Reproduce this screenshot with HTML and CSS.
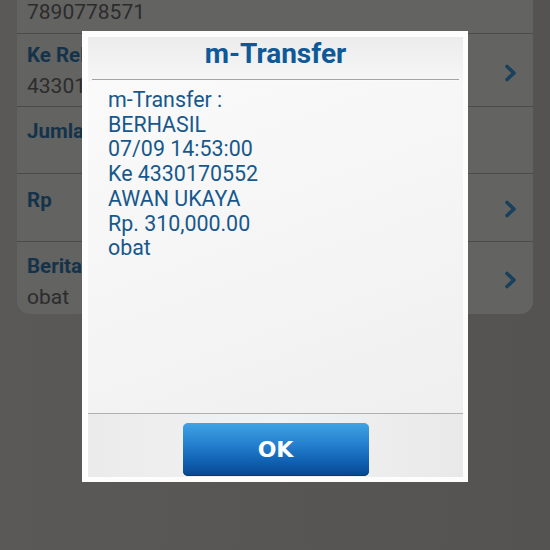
FILE: index.html
```html
<!DOCTYPE html>
<html>
<head>
<meta charset="utf-8">
<link rel="stylesheet" href="styles.css">
</head>
<body>
<div class="screen">
  <div class="card">
    <div class="row row-top"><span class="value">7890778571</span></div>
    <div class="row row-a">
      <div class="texts"><div class="label">Ke Rekening</div><div class="value">4330170552</div></div>
      <svg class="chev" viewBox="0 0 14 18"><path d="M3 2.5 L10 9 L3 15.5" /></svg>
    </div>
    <div class="row row-b">
      <div class="texts"><div class="label">Jumlah</div></div>
    </div>
    <div class="row row-c">
      <div class="texts"><div class="label">Rp</div></div>
      <svg class="chev" viewBox="0 0 14 18"><path d="M3 2.5 L10 9 L3 15.5" /></svg>
    </div>
    <div class="row row-d">
      <div class="texts"><div class="label">Berita</div><div class="value">obat</div></div>
      <svg class="chev" viewBox="0 0 14 18"><path d="M3 2.5 L10 9 L3 15.5" /></svg>
    </div>
  </div>
</div>

<div class="dialog">
  <div class="dlg-head"><h1 class="dlg-title">m-Transfer</h1></div>
  <div class="dlg-sep"></div>
  <div class="dlg-body">
    <div>m-Transfer :</div>
    <div>BERHASIL</div>
    <div>07/09 14:53:00</div>
    <div>Ke 4330170552</div>
    <div>AWAN UKAYA</div>
    <div>Rp. 310,000.00</div>
    <div>obat</div>
  </div>
  <div class="dlg-foot">
    <button class="ok">OK</button>
  </div>
</div>
</body>
</html>
```

FILE: styles.css
```css
html, body {
  margin: 0;
  padding: 0;
}
body {
  width: 550px;
  height: 550px;
  overflow: hidden;
  position: relative;
  background: linear-gradient(90deg, #5a5957 0%, #575654 50%, #545351 100%);
  font-family: Roboto, "Noto Sans", sans-serif;
}
.screen {
  padding: 0 17px;
}
.card {
  background: #636362;
  border-radius: 0 0 13px 13px;
}
.row {
  box-sizing: border-box;
  display: flex;
  align-items: center;
  justify-content: space-between;
  padding: 0 15px 0 10px;
  border-top: 1px solid #4b4b4a;
  font-size: 21px;
  line-height: 31px;
}
.row-top {
  border-top: none;
  height: 33px;
  line-height: 24px;
  align-items: flex-start;
}
.texts {
  align-self: flex-start;
  width: 55px;
  overflow: hidden;
  white-space: nowrap;
}
.row-a { height: 73px; padding-top: 6px; }
.row-b { height: 67px; padding-top: 9px; }
.row-c { height: 68px; padding-top: 11px; }
.row-d { height: 73px; padding-top: 9px; }
.row-c .chev { margin-top: -8px; }
.row-d .chev { margin-top: -6px; }
.label {
  font-weight: bold;
  color: #14334b;
  font-size: 20.5px;
}
.value {
  color: #2c2c2c;
}
.chev {
  width: 14px;
  height: 18px;
  fill: none;
  stroke: #19415d;
  stroke-width: 3.6;
  stroke-linecap: round;
  stroke-linejoin: round;
}

.dialog {
  position: absolute;
  left: 82px;
  top: 31px;
  width: 386px;
  height: 451px;
  box-sizing: border-box;
  border-style: solid;
  border-color: #fdfdfd;
  border-width: 6px 5px 5px 6px;
  display: flex;
  flex-direction: column;
  background: #f4f4f4;
}
.dlg-head {
  height: 42px;
  background: linear-gradient(180deg, #ececec 0%, #f6f6f6 100%);
  text-align: center;
}
.dlg-title {
  margin: 0;
  font-size: 28px;
  line-height: 33px;
  font-weight: bold;
  color: #0e5997;
}
.dlg-sep {
  height: 1px;
  margin: 0 4px;
  background: #a4a4a4;
  border-bottom: 1px solid #fafafa;
}
.dlg-body {
  flex: 1;
  padding: 7px 20px 0 20px;
  font-size: 21.4px;
  line-height: 24.7px;
  color: #17588c;
  background: linear-gradient(160deg, #fafafa 0%, #f4f4f4 60%, #efefef 100%);
}
.dlg-foot {
  height: 64px;
  border-top: 1px solid #b0b0b0;
  background: linear-gradient(90deg, #ebebeb 0%, #f2f2f2 50%, #e9e9e9 100%);
  display: flex;
  justify-content: center;
  align-items: flex-start;
  padding-top: 9px;
  box-sizing: border-box;
}
.ok {
  width: 186px;
  height: 53px;
  border: none;
  border-radius: 5px;
  background: linear-gradient(180deg, #3fa3e4 0%, #2580cf 40%, #0f5fb0 75%, #07468e 100%);
  box-shadow: inset 0 -1px 0 #043a78;
  color: #ffffff;
  font-family: "DejaVu Sans", sans-serif;
  font-weight: bold;
  font-size: 22px;
  padding: 0;
}
```
